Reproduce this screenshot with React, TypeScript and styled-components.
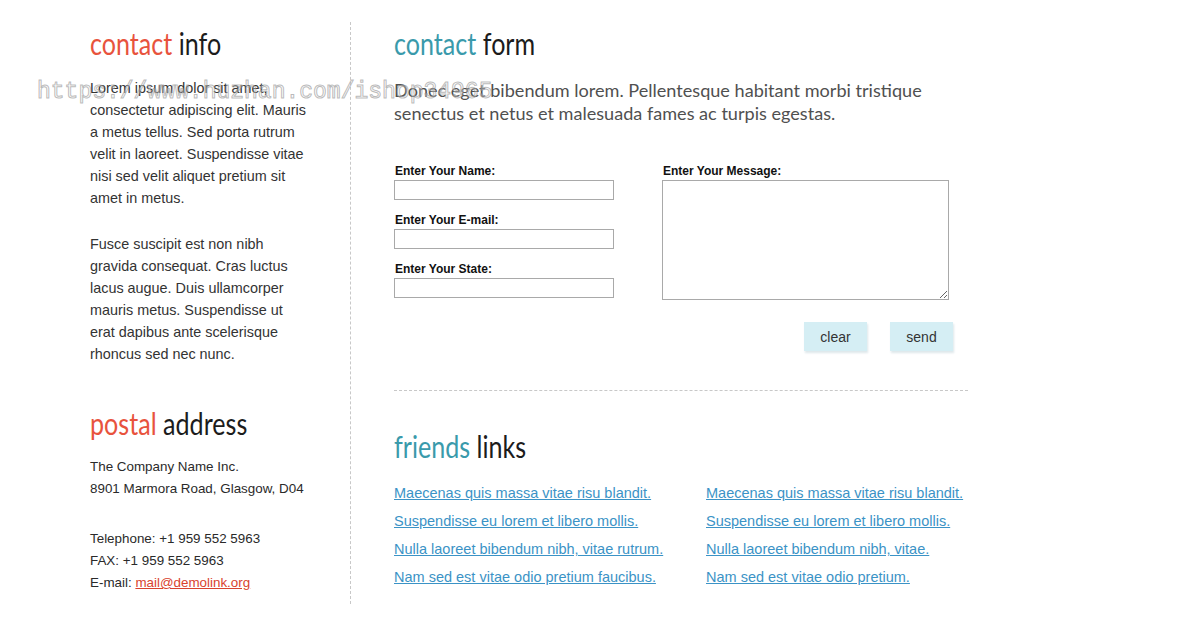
import styled, { createGlobalStyle } from "styled-components";

const GlobalStyle = createGlobalStyle`
  body {
    margin: 0;
    background: #fff;
    font-family: "Liberation Sans", Arial, sans-serif;
    color: #333;
  }
`;

const Page = styled.div`
  position: relative;
  display: flex;
  padding: 22px 0 0 90px;
  width: 1200px;
  height: 638px;
  box-sizing: border-box;
  overflow: hidden;
`;

const Sidebar = styled.aside`
  width: 220px;
  padding-right: 40px;
  border-right: 1px dashed #c8c8c8;
  height: 582px;
`;

const Main = styled.main`
  width: 574px;
  padding-left: 43px;
`;

const Heading = styled.h2<{ $gap?: number }>`
  margin: ${({ $gap }) => $gap ?? 0}px 0 0;
  font-family: Lato, "Open Sans", sans-serif;
  font-weight: normal;
  font-size: 31px;
  line-height: 42px;
  color: #1c1c1c;
  white-space: nowrap;
`;

const HeadingText = styled.span`
  display: inline-block;
  transform: scaleX(0.81);
  transform-origin: left center;
`;

const Accent = styled.span<{ $tone: string }>`
  color: ${({ $tone }) => $tone};
`;

const Text = styled.p<{ $gap?: number }>`
  margin: ${({ $gap }) => $gap ?? 0}px 0 0;
  font-size: 14.4px;
  line-height: 22px;
  color: #333;
`;

const Address = styled.p<{ $gap?: number }>`
  margin: ${({ $gap }) => $gap ?? 0}px 0 0;
  font-size: 13.4px;
  line-height: 22px;
  color: #2a2a2a;
`;

const MailLink = styled.a`
  color: #d9432e;
`;

const Intro = styled.p`
  margin: 15px 0 0;
  max-width: 548px;
  font-family: Lato, "Open Sans", sans-serif;
  font-size: 18.1px;
  line-height: 23px;
  color: #505050;
`;

const Form = styled.form`
  margin-top: 37px;
  display: grid;
  grid-template-columns: 220px 287px;
  column-gap: 48px;
`;

const Fields = styled.div`
  display: flex;
  flex-direction: column;
  gap: 11px;
`;

const Field = styled.label`
  display: flex;
  flex-direction: column;
`;

const Label = styled.span`
  font-size: 12px;
  font-weight: bold;
  line-height: 18px;
  color: #111;
  padding-left: 1px;
`;

const Input = styled.input`
  box-sizing: border-box;
  width: 220px;
  height: 20px;
  margin: 0;
  border: 1px solid #a9a9a9;
`;

const TextArea = styled.textarea`
  box-sizing: border-box;
  width: 287px;
  height: 120px;
  margin: 0;
  border: 1px solid #a9a9a9;
`;

const Buttons = styled.div`
  grid-column: 2;
  display: flex;
  justify-content: flex-end;
  gap: 23px;
  margin-top: 22px;
  margin-right: -4px;
`;

const Button = styled.button`
  width: 63px;
  height: 29px;
  border: none;
  background: #d5eef4;
  box-shadow: 1px 2px 2px rgba(120, 160, 170, 0.25);
  font-family: "Liberation Sans", Arial, sans-serif;
  font-size: 14px;
  color: #333;
  cursor: pointer;
`;

const Divider = styled.hr`
  margin: 39px 0 0;
  width: 574px;
  border: none;
  border-top: 1px dashed #c8c8c8;
`;

const LinkGrid = styled.ul`
  list-style: none;
  margin: 15px 0 0;
  padding: 0;
  display: grid;
  grid-template-columns: 312px auto;
  row-gap: 6px;
`;

const FriendLink = styled.a`
  font-size: 14.5px;
  line-height: 22px;
  color: #3b93c6;
`;

const Watermark = styled.div`
  position: absolute;
  left: 37px;
  top: 79px;
  font-family: "Liberation Mono", monospace;
  font-size: 23px;
  color: rgba(255, 255, 255, 0.3);
  -webkit-text-stroke: 1px rgba(140, 140, 140, 0.6);
  pointer-events: none;
`;

const links = [
  "Maecenas quis massa vitae risu blandit.",
  "Maecenas quis massa vitae risu blandit.",
  "Suspendisse eu lorem et libero mollis.",
  "Suspendisse eu lorem et libero mollis.",
  "Nulla laoreet bibendum nibh, vitae rutrum.",
  "Nulla laoreet bibendum nibh, vitae.",
  "Nam sed est vitae odio pretium faucibus.",
  "Nam sed est vitae odio pretium.",
];

const App = () => {
  return (
    <>
      <GlobalStyle />
      <Page>
        <Sidebar>
          <Heading>
            <HeadingText>
              <Accent $tone="#e8533d">contact</Accent> info
            </HeadingText>
          </Heading>
          <Text $gap={13}>
            Lorem ipsum dolor sit amet, consectetur adipiscing elit. Mauris a
            metus tellus. Sed porta rutrum velit in laoreet. Suspendisse vitae
            nisi sed velit aliquet pretium sit amet in metus.
          </Text>
          <Text $gap={24}>
            Fusce suscipit est non nibh gravida consequat. Cras luctus lacus
            augue. Duis ullamcorper mauris metus. Suspendisse ut erat dapibus
            ante scelerisque rhoncus sed nec nunc.
          </Text>
          <Heading $gap={37}>
            <HeadingText>
              <Accent $tone="#e8533d">postal</Accent> address
            </HeadingText>
          </Heading>
          <Address $gap={12}>
            The Company Name Inc.
            <br />
            8901 Marmora Road, Glasgow, D04
          </Address>
          <Address $gap={28}>
            Telephone: +1 959 552 5963
            <br />
            FAX: +1 959 552 5963
            <br />
            E-mail: <MailLink href="#">mail@demolink.org</MailLink>
          </Address>
        </Sidebar>
        <Main>
          <Heading>
            <HeadingText>
              <Accent $tone="#3a9aab">contact</Accent> form
            </HeadingText>
          </Heading>
          <Intro>
            Donec eget bibendum lorem. Pellentesque habitant morbi tristique
            senectus et netus et malesuada fames ac turpis egestas.
          </Intro>
          <Form onSubmit={(e) => e.preventDefault()}>
            <Fields>
              <Field>
                <Label>Enter Your Name:</Label>
                <Input />
              </Field>
              <Field>
                <Label>Enter Your E-mail:</Label>
                <Input />
              </Field>
              <Field>
                <Label>Enter Your State:</Label>
                <Input />
              </Field>
            </Fields>
            <Field>
              <Label>Enter Your Message:</Label>
              <TextArea />
            </Field>
            <Buttons>
              <Button type="reset">clear</Button>
              <Button type="submit">send</Button>
            </Buttons>
          </Form>
          <Divider />
          <Heading $gap={34}>
            <HeadingText>
              <Accent $tone="#3a9aab">friends</Accent> links
            </HeadingText>
          </Heading>
          <LinkGrid>
            {links.map((text, i) => (
              <li key={i}>
                <FriendLink href="#">{text}</FriendLink>
              </li>
            ))}
          </LinkGrid>
        </Main>
        <Watermark>https://www.huzhan.com/ishop34965</Watermark>
      </Page>
    </>
  );
};

export default App;
